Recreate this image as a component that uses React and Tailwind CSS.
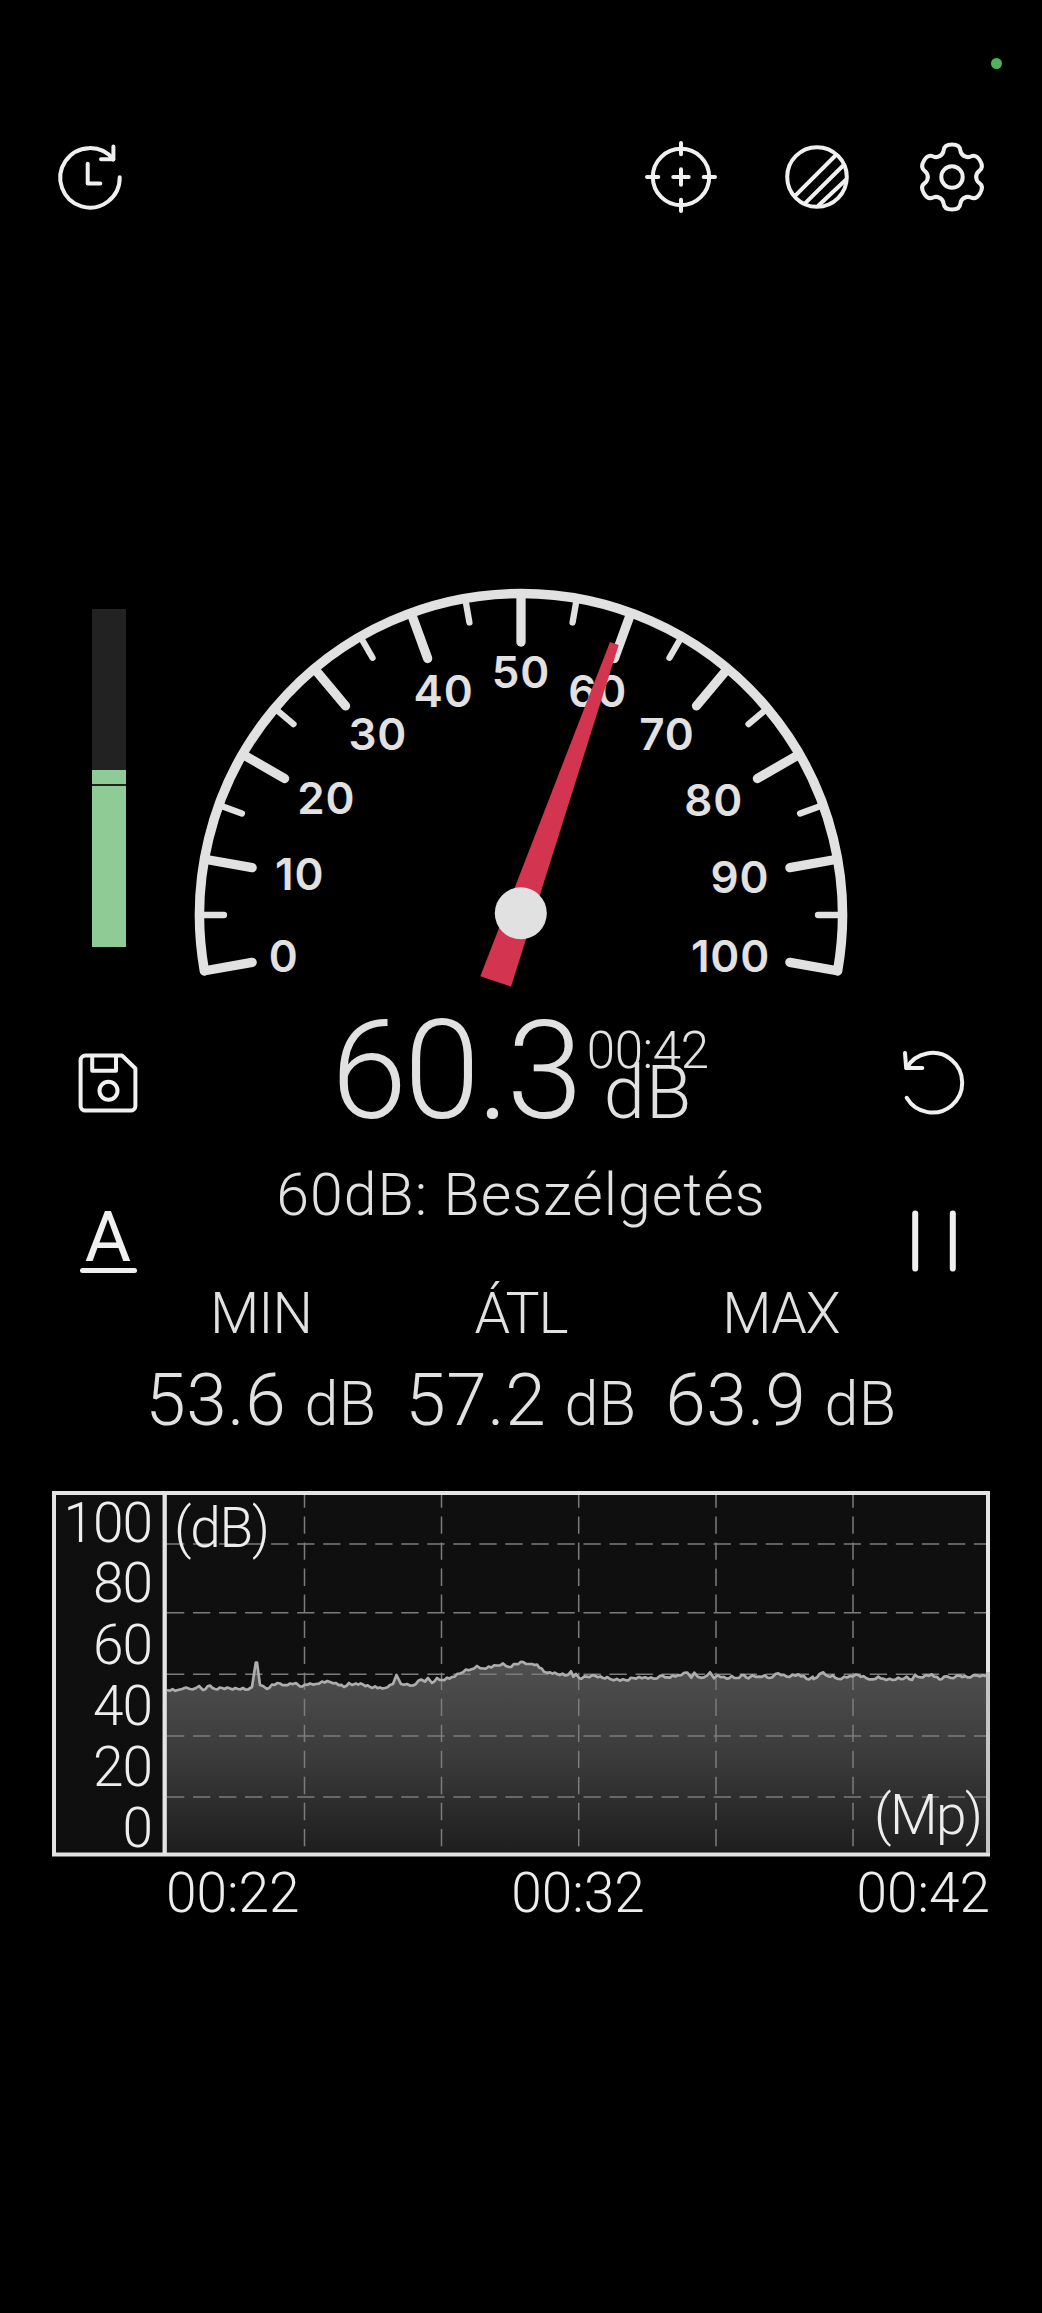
const FG = "#e1e1e1";
const ICON = "#f0f0f0";

const MAJOR_LABELS = [
  { value: 0, x: -237.3, y: 57 },
  { value: 10, x: -221.3, y: -24.7 },
  { value: 20, x: -194.7, y: -101.3 },
  { value: 30, x: -143.3, y: -165.3 },
  { value: 40, x: -77.5, y: -208.5 },
  { value: 50, x: -0.2, y: -226.7 },
  { value: 60, x: 76.7, y: -208.5 },
  { value: 70, x: 146, y: -165 },
  { value: 80, x: 192.7, y: -99.3 },
  { value: 90, x: 219, y: -22 },
  { value: 100, x: 209.5, y: 57 },
];

const STATS = [
  { label: "MIN", value: "53.6" },
  { label: "ÁTL", value: "57.2" },
  { label: "MAX", value: "63.9" },
];

const AXIS = [
  { value: 100, y: 51.3 },
  { value: 80, y: 111.3 },
  { value: 60, y: 173 },
  { value: 40, y: 234 },
  { value: 20, y: 294.7 },
  { value: 0, y: 355.5 },
];

const GRID_X = [252.5, 389.5, 526.7, 664, 801];
const GRID_Y = [53, 121.8, 183.3, 245, 306];

const HISTORY = [
  [115, 199], [126, 199], [130, 198], [134, 196.5], [138, 198], [144, 197], [147, 195], [151, 199], [158, 194.5],
  [163, 198], [170, 197], [178, 197.5], [186, 198], [191, 197], [196, 198.5], [200, 196], [203.8, 171.5], [205, 171.5], [208, 194], [211, 195],
  [215, 198], [220, 193.5], [228, 192.5], [233, 194], [238, 192.5], [244, 192], [248, 195.5], [253, 193.5], [258, 192.5], [264, 193],
  [270, 190.5], [278, 191], [284, 192], [292, 196], [297, 192], [300, 194], [304, 192.5], [311, 193.5], [318, 196], [328, 196.5], [333, 197], [338, 194],
  [341, 193], [344.5, 184], [349, 193], [355, 193], [361, 194.5], [369, 188.5], [373, 190.5], [376, 187], [380, 192], [385, 187],
  [390, 189], [400, 186], [408, 182.5], [414, 178.5], [419, 178.5], [425, 175], [431, 177.5], [445, 174.5], [451, 172.5], [457, 176],
  [464, 173], [471, 171], [477, 173], [480, 173], [485, 173.5], [492, 180.7], [498, 181.3], [505, 183], [516, 184], [519, 180.3],
  [521.3, 185.7], [524, 183], [527.3, 187.3], [534.7, 185.7], [543, 184.7], [551, 187], [555.3, 186], [558.7, 188.3],
  [574, 189.3], [581, 187], [593, 186.3], [602, 187.7], [610.7, 184.7], [615.3, 186.3], [626, 184.3], [635.3, 181.7],
  [639.3, 186.7], [642.3, 181.7], [645.7, 185.7], [652, 186.3], [658, 181.3], [662, 187.3], [665.7, 184.3], [674.7, 187.7],
  [679.7, 185], [684.7, 187], [692, 184], [696.3, 187.3], [700.3, 184.3], [706.7, 185.7], [713, 184.3], [717.3, 187],
  [726.3, 182.3], [734.7, 185.7], [746.3, 183.3], [757.3, 188.3], [760.7, 185.7], [761.5, 188], [771.3, 181.3], [776.3, 185.3],
  [780.7, 184.3], [786.3, 188], [798, 185], [806.3, 184], [814, 187], [820.7, 188.3], [826.3, 185.7], [831.3, 187.7],
  [840.7, 189], [846.3, 186.7], [851.3, 188], [854.7, 185.7], [860, 189], [863, 183.7], [868, 186.3], [879.7, 183.3],
  [887.3, 188.3], [894.7, 185.3], [898.7, 187], [908, 184.7], [915.3, 186.3], [924.7, 184.3], [934, 185.3],
];

function polar(radius, value) {
  const a = ((value - 50) * 2 * Math.PI) / 180;
  return [radius * Math.sin(a), -radius * Math.cos(a)];
}

// adds a small ripple between samples that are far apart
function withRipple(points) {
  const out = [points[0]];
  for (let i = 1; i < points.length; i++) {
    const [x0, y0] = points[i - 1];
    const [x1, y1] = points[i];
    const steps = Math.abs(y1 - y0) > 8 ? 1 : Math.max(1, Math.round((x1 - x0) / 2.8));
    for (let s = 1; s < steps; s++) {
      const t = s / steps;
      out.push([x0 + (x1 - x0) * t, y0 + (y1 - y0) * t + (s % 2 ? 0.8 : -0.8)]);
    }
    out.push([x1, y1]);
  }
  return out;
}

function Icon({ children }) {
  return (
    <svg
      className="size-[72px] shrink-0"
      viewBox="-36 -36 72 72"
      fill="none"
      stroke={ICON}
      strokeWidth="4"
      strokeLinecap="round"
      strokeLinejoin="round"
      overflow="visible"
    >
      {children}
    </svg>
  );
}

function HistoryIcon() {
  return (
    <Icon>
      <path d="M29.7 0.3A29.7 29.7 0 1 1 23.3 -17.6" />
      <path d="M23.4 -30.5V-17.7H11" />
      <path d="M-2.3 -13.3V6.5H10.3" />
    </Icon>
  );
}

function CalibrateIcon() {
  return (
    <Icon>
      <circle r="28.2" />
      <path d="M0 -34V-22.7M0 34V22.7M-34 0H-22.7M34 0H22.7M-7.7 0H7.7M0 -7.7V7.7" />
    </Icon>
  );
}

function ThemeIcon() {
  return (
    <Icon>
      <circle r="29.8" />
      <path d="M19 -22L-21.7 18.7M26.7 -12L-12 26.3M29.2 2.5L1.5 28.5" />
    </Icon>
  );
}

function SettingsIcon() {
  return (
    <Icon>
      {[0, 60, 120, 180, 240, 300].map((deg) => (
        <path
          key={deg}
          transform={`rotate(${deg})`}
          d="M-12.1 -21C-9.5 -22.5 -8.6 -24.3 -8.4 -26.5C-8.1 -30.5 -5 -32.5 0 -32.5C5 -32.5 8.1 -30.5 8.4 -26.5C8.6 -24.3 9.5 -22.5 12.1 -21"
        />
      ))}
      <circle r="10.7" />
    </Icon>
  );
}

function SaveIcon() {
  return (
    <Icon>
      <path d="M-22.5 -27.5H14L27.4 -14.5V23A4.8 4.8 0 0 1 22.6 27.6H-22.7A4.8 4.8 0 0 1 -27.4 23V-22.7A4.8 4.8 0 0 1 -22.5 -27.5Z" />
      <path d="M-15.8 -26V-12.3H8V-26" />
      <circle cx="0.5" cy="7.8" r="9" />
    </Icon>
  );
}

function ResetIcon() {
  return (
    <Icon>
      <path d="M-25.3 14.8A29.8 29.8 0 1 0 -25.5 -15" />
      <path d="M-27 -30L-25.8 -15H-9.7" />
    </Icon>
  );
}

function PauseIcon() {
  return (
    <Icon>
      <path strokeWidth="6" d="M-18.8 -27.5V27.5M18.8 -27.5V27.5" />
    </Icon>
  );
}

function LevelBar() {
  return (
    <div className="mt-[29px] ml-[92px] flex h-[338px] w-[34px] flex-col bg-[#222222]">
      <div className="mt-auto h-[14px] bg-[#8fcb95]" />
      <div className="mt-[1.5px] h-[161.5px] bg-[#8fcb95]" />
    </div>
  );
}

function Gauge() {
  const [x0, y0] = polar(321.5, 0);
  const [x1, y1] = polar(321.5, 100);
  return (
    <svg className="ml-[59px] h-[420px] w-[672px]" viewBox="-336 -335 672 420" fill="none">
      <g stroke={FG} strokeLinecap="round">
        <path strokeWidth="9.5" d={`M${x0} ${y0}A321.5 321.5 0 1 1 ${x1} ${y1}`} />
        {Array.from({ length: 21 }, (_, i) => i * 5).map((v) => {
          const major = v % 10 === 0;
          const [ax, ay] = polar(321, v);
          const [bx, by] = polar(major ? 273 : 297, v);
          return <line key={v} x1={ax} y1={ay} x2={bx} y2={by} strokeWidth={major ? 9.3 : 6.3} />;
        })}
      </g>
      <g
        className="font-['Inter',sans-serif] text-[44px] font-semibold tracking-[0.8px]"
        fill={FG}
        textAnchor="middle"
      >
        {MAJOR_LABELS.map((l) => (
          <text key={l.value} x={l.x} y={l.y}>
            {l.value}
          </text>
        ))}
      </g>
      <polygon points="89,-273 97.7,-270 -10,71.7 -40.7,61.3" fill="#d3344f" />
      <circle cx="-0.2" cy="-1.7" r="26" fill={FG} />
    </svg>
  );
}

function Chart() {
  const line = withRipple(HISTORY)
    .map(([x, y]) => `${x},${y}`)
    .join(" ");
  return (
    <svg className="ml-[52px] h-[366px] w-[938px] shrink-0" viewBox="0 0 938 366" fill="none">
      <defs>
        <linearGradient id="level" gradientUnits="userSpaceOnUse" x1="0" y1="170" x2="0" y2="361">
          <stop offset="0" stopColor="#505050" />
          <stop offset="0.5" stopColor="#3b3b3b" />
          <stop offset="1" stopColor="#1e1e1e" />
        </linearGradient>
      </defs>
      <rect x="2" y="2" width="934" height="362" fill="#0f0f0f" />
      <polygon points={`115,361 ${line} 934,361`} fill="url(#level)" />
      <g stroke="#7c7c7c" strokeWidth="1.5" strokeDasharray="17.3 8.73">
        {GRID_Y.map((y) => (
          <line key={y} x1="115" x2="934" y1={y} y2={y} />
        ))}
        {GRID_X.map((x) => (
          <line key={x} x1={x} x2={x} y1="-0.5" y2="361" />
        ))}
      </g>
      <polyline points={line} stroke="#adadad" strokeWidth="2.7" strokeLinejoin="round" />
      <rect x="2" y="2" width="934" height="361.5" stroke="#e4e4e4" strokeWidth="4" />
      <line x1="112.7" x2="112.7" y1="0" y2="365" stroke="#e4e4e4" strokeWidth="4.3" />
      <line x1="936" x2="936" y1="181" y2="362" stroke="#c4c4c4" strokeWidth="4" />
      <g className="font-['Roboto',sans-serif] text-[55px] font-light" fill="#ededed">
        {AXIS.map((a) => (
          <text key={a.value} x="100" y={a.y} textAnchor="end" letterSpacing="-1">
            {a.value}
          </text>
        ))}
        <text x="122" y="55.7" textLength="96">(dB)</text>
        <text x="822" y="343.3" textLength="109">(Mp)</text>
      </g>
    </svg>
  );
}

export default function App() {
  return (
    <div className="flex h-[2313px] w-[1042px] flex-col overflow-hidden bg-black font-['Roboto',sans-serif] font-light text-[#e1e1e1]">
      <div className="flex h-[141px] shrink-0 justify-end pt-[58px] pr-10">
        <span className="size-[11px] rounded-full bg-[#55b05b]" />
      </div>

      <header className="flex h-[72px] shrink-0 items-center justify-between px-[54px]">
        <HistoryIcon />
        <div className="flex gap-[63.5px]">
          <CalibrateIcon />
          <ThemeIcon />
          <SettingsIcon />
        </div>
      </header>

      <section className="mt-[367px] flex h-[420px] shrink-0">
        <LevelBar />
        <Gauge />
      </section>

      <section className="flex h-[491px] shrink-0">
        <div className="flex w-[144px] shrink-0 flex-col items-end pt-[47px]">
          <div className="flex w-[72px] flex-col items-center">
            <SaveIcon />
            <span className="mt-[76px] text-[71px] leading-[84px] font-normal text-[#f0f0f0]">A</span>
            <span className="-mt-[11px] h-[5px] w-[57px] rounded-full bg-[#f0f0f0]" />
          </div>
        </div>

        <main className="-ml-[13px] w-[780px] shrink-0">
          <div className="flex items-baseline pt-[3px] pl-[200px]">
            <span className="text-[137px] leading-[137px] tracking-[-3px]">60.3</span>
            <span className="relative ml-[24px] text-[74px] leading-none tracking-[1px]">
              dB
              <span className="absolute -top-[31px] -left-[17px] text-[51px] leading-[51px] tracking-[-0.4px]">
                00:42
              </span>
            </span>
          </div>
          <p className="mt-[19px] text-center text-[59px] leading-[72px] tracking-[1px]">60dB: Beszélgetés</p>
          <div className="mt-[51px] grid grid-cols-3 text-center">
            {STATS.map((s) => (
              <div key={s.label}>
                <div className="text-[57px] leading-[64px] tracking-[-1px]">{s.label}</div>
                <div className="mt-[14px] text-[73px] leading-[80px] tracking-[0.5px] whitespace-nowrap">
                  {s.value} <span className="text-[61px]">dB</span>
                </div>
              </div>
            ))}
          </div>
        </main>

        <div className="flex flex-col pt-[47px]">
          <div className="-ml-[15px]">
            <ResetIcon />
          </div>
          <div className="mt-[86px] -ml-[13px]">
            <PauseIcon />
          </div>
        </div>
      </section>

      <Chart />
      <div className="mt-[4px] flex justify-between pr-[52px] pl-[166px] text-[55px] leading-[64px] text-[#ededed]">
        <span>00:22</span>
        <span>00:32</span>
        <span>00:42</span>
      </div>
    </div>
  );
}
